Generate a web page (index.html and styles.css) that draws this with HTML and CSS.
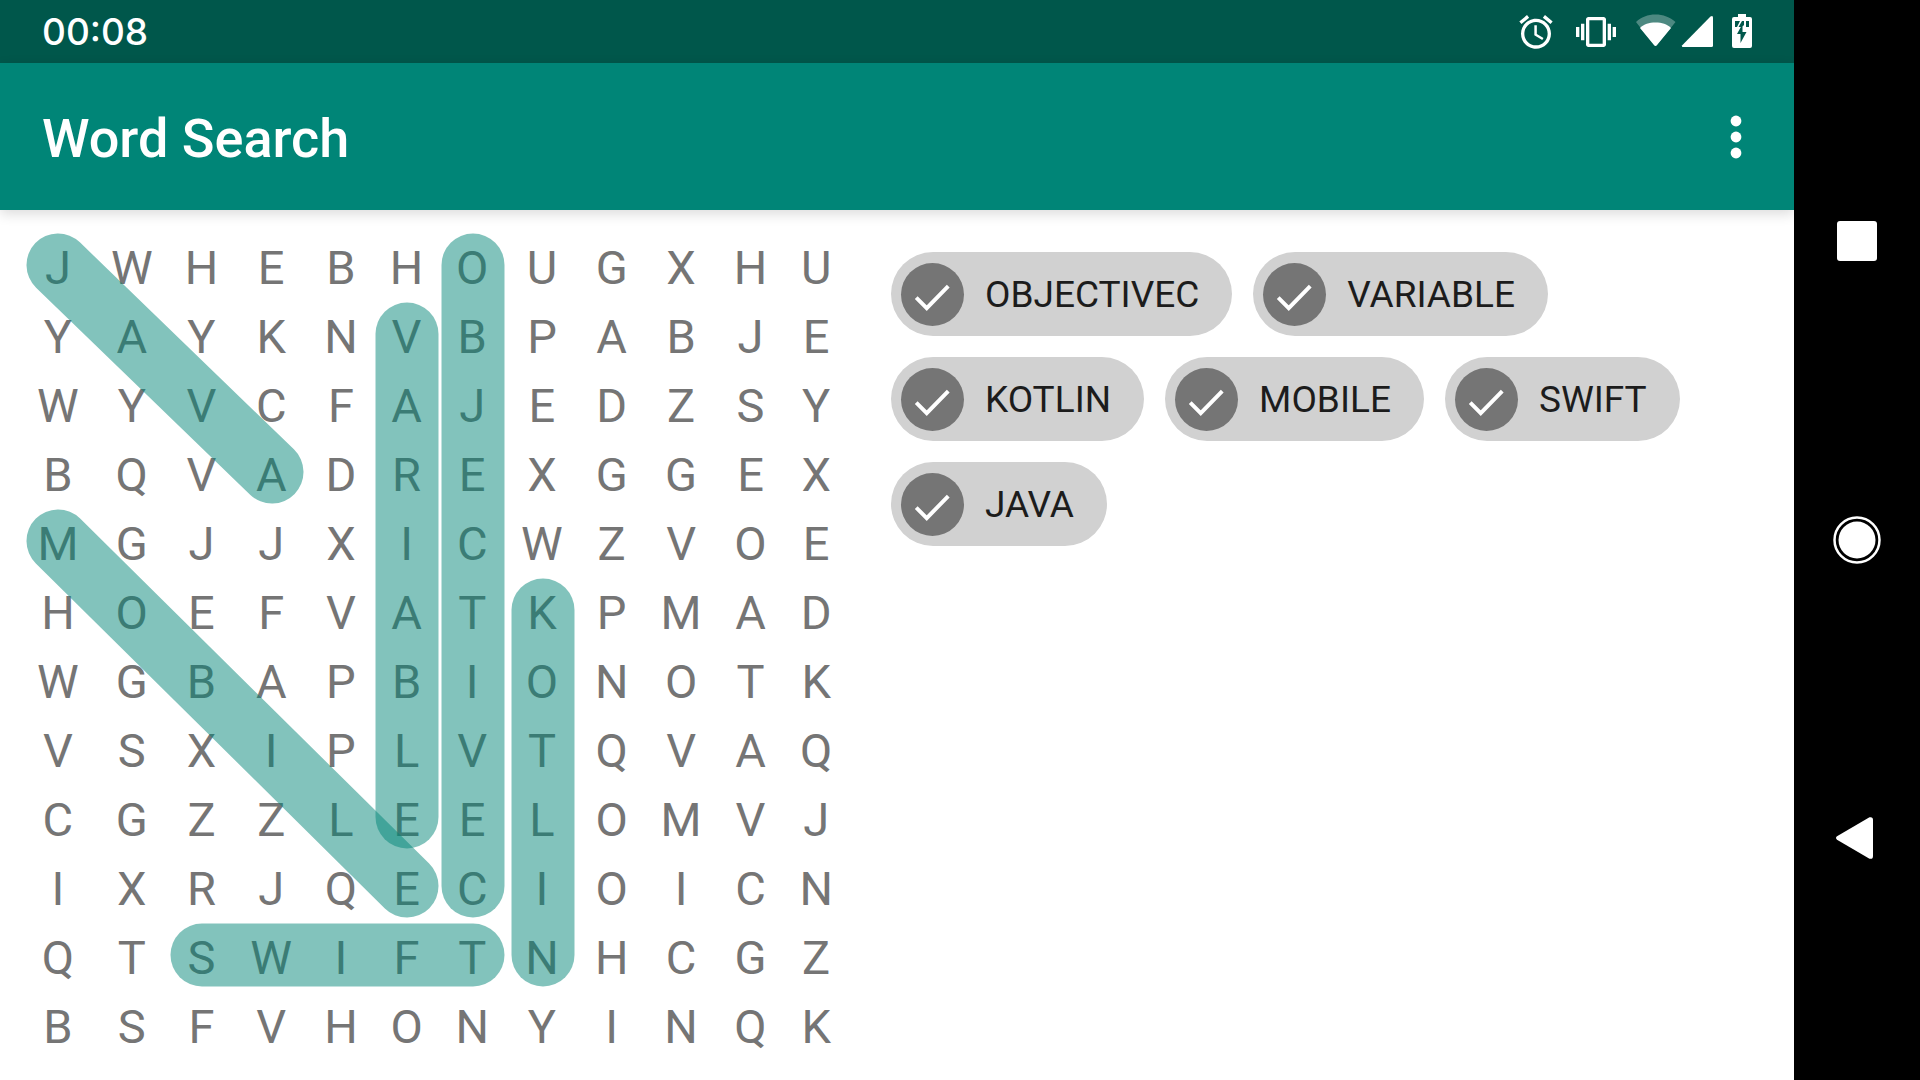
FILE: index.html
```html
<!DOCTYPE html>
<html lang="en">
<head>
<meta charset="utf-8">
<meta name="viewport" content="width=device-width, initial-scale=1">
<title>Word Search</title>
<link rel="stylesheet" href="styles.css">
</head>
<body>
<div class="app">
  <div class="status-bar">
    <time class="clock">00:08</time>
    <div class="status-icons">
      <svg width="40" height="40" viewBox="0 0 24 24" role="img" aria-label="Alarm"><path d="M22 5.72l-4.6-3.86-1.29 1.53 4.6 3.86L22 5.72zM7.88 3.39L6.6 1.86 2 5.71l1.29 1.53 4.59-3.85zM12.5 8H11v6l4.75 2.85.75-1.23-4-2.37V8zM12 4c-4.97 0-9 4.03-9 9s4.02 9 9 9c4.97 0 9-4.03 9-9s-4.03-9-9-9zm0 16c-3.87 0-7-3.13-7-7s3.13-7 7-7 7 3.13 7 7-3.13 7-7 7z"/></svg>
      <svg width="40" height="40" viewBox="0 0 24 24" role="img" aria-label="Vibrate"><path d="M0 15h2V9H0v6zm3 2h2V7H3v10zm19-8v6h2V9h-2zm-3 8h2V7h-2v10zM16.500 3h-9C6.670 3 6 3.670 6 4.500v15c0 .83.67 1.500 1.500 1.500h9c.83 0 1.500-.67 1.500-1.500v-15c0-.83-.67-1.500-1.500-1.500zM16 19H8V5h8v14z"/></svg>
      <div class="signal-icons">
        <svg width="40" height="40" viewBox="0 0 40 40" role="img" aria-label="Wi-Fi"><path opacity=".3" d="M0 10C5 5 12 2.500 19.500 2.500S34 5 39.500 10L21 33q-1.500 2-3 0z"/><path d="M4 16C8 12 13 10.500 19.500 10.500S31 12 35 16L21 33q-1.500 2-3 0z"/></svg>
        <svg class="cell" width="30" height="40" viewBox="0 0 30 40" role="img" aria-label="Mobile signal"><path d="M0 33.500L28.500 4.500Q31 3 31 5.500V33.500Q31 35 29.500 35H1Q-.500 35 0 33.500z"/></svg>
      </div>
      <svg width="20" height="40" viewBox="0 0 20 40" role="img" aria-label="Battery charging"><path d="M6 2h8v3h4q2 0 2 2v27q0 2-2 2H2q-2 0-2-2V7q0-2 2-2h4z"/><path class="cut" d="M3 9h5L5 15H3zM12 9v4l-2 2H6.500L10 9zM14 9h3v6h-3zM10.500 12v8h4L8.500 31v-9H5z"/></svg>
    </div>
  </div>
  <header class="app-bar">
    <h1 class="title">Word Search</h1>
    <button class="more" type="button" aria-label="More options">
      <svg width="12" height="44" viewBox="0 0 12 44"><circle cx="6" cy="6" r="5.400"/><circle cx="6" cy="22" r="5.400"/><circle cx="6" cy="38" r="5.400"/></svg>
    </button>
  </header>
  <main class="content">
    <div class="board">
      <table class="letters">
        <tr><td>J</td><td>W</td><td>H</td><td>E</td><td>B</td><td>H</td><td>O</td><td>U</td><td>G</td><td>X</td><td>H</td><td>U</td></tr>
        <tr><td>Y</td><td>A</td><td>Y</td><td>K</td><td>N</td><td>V</td><td>B</td><td>P</td><td>A</td><td>B</td><td>J</td><td>E</td></tr>
        <tr><td>W</td><td>Y</td><td>V</td><td>C</td><td>F</td><td>A</td><td>J</td><td>E</td><td>D</td><td>Z</td><td>S</td><td>Y</td></tr>
        <tr><td>B</td><td>Q</td><td>V</td><td>A</td><td>D</td><td>R</td><td>E</td><td>X</td><td>G</td><td>G</td><td>E</td><td>X</td></tr>
        <tr><td>M</td><td>G</td><td>J</td><td>J</td><td>X</td><td>I</td><td>C</td><td>W</td><td>Z</td><td>V</td><td>O</td><td>E</td></tr>
        <tr><td>H</td><td>O</td><td>E</td><td>F</td><td>V</td><td>A</td><td>T</td><td>K</td><td>P</td><td>M</td><td>A</td><td>D</td></tr>
        <tr><td>W</td><td>G</td><td>B</td><td>A</td><td>P</td><td>B</td><td>I</td><td>O</td><td>N</td><td>O</td><td>T</td><td>K</td></tr>
        <tr><td>V</td><td>S</td><td>X</td><td>I</td><td>P</td><td>L</td><td>V</td><td>T</td><td>Q</td><td>V</td><td>A</td><td>Q</td></tr>
        <tr><td>C</td><td>G</td><td>Z</td><td>Z</td><td>L</td><td>E</td><td>E</td><td>L</td><td>O</td><td>M</td><td>V</td><td>J</td></tr>
        <tr><td>I</td><td>X</td><td>R</td><td>J</td><td>Q</td><td>E</td><td>C</td><td>I</td><td>O</td><td>I</td><td>C</td><td>N</td></tr>
        <tr><td>Q</td><td>T</td><td>S</td><td>W</td><td>I</td><td>F</td><td>T</td><td>N</td><td>H</td><td>C</td><td>G</td><td>Z</td></tr>
        <tr><td>B</td><td>S</td><td>F</td><td>V</td><td>H</td><td>O</td><td>N</td><td>Y</td><td>I</td><td>N</td><td>Q</td><td>K</td></tr>
      </table>
      <svg class="found" width="828" height="828" viewBox="0 0 828 828" aria-hidden="true">
        <line x1="37" y1="32" x2="251" y2="239"/>
        <line x1="37" y1="308" x2="386" y2="653"/>
        <line x1="386" y1="101" x2="386" y2="584"/>
        <line x1="452" y1="32" x2="452" y2="653"/>
        <line x1="522" y1="377" x2="522" y2="722"/>
        <line x1="181" y1="722" x2="452" y2="722"/>
      </svg>
    </div>
    <ul class="words">
      <li class="chip"><svg class="check" viewBox="0 0 24 24"><path d="M5.800 13.200l4 4L18 8.800"/></svg>OBJECTIVEC</li>
      <li class="chip"><svg class="check" viewBox="0 0 24 24"><path d="M5.800 13.200l4 4L18 8.800"/></svg>VARIABLE</li>
      <li class="chip"><svg class="check" viewBox="0 0 24 24"><path d="M5.800 13.200l4 4L18 8.800"/></svg>KOTLIN</li>
      <li class="chip"><svg class="check" viewBox="0 0 24 24"><path d="M5.800 13.200l4 4L18 8.800"/></svg>MOBILE</li>
      <li class="chip"><svg class="check" viewBox="0 0 24 24"><path d="M5.800 13.200l4 4L18 8.800"/></svg>SWIFT</li>
      <li class="chip"><svg class="check" viewBox="0 0 24 24"><path d="M5.800 13.200l4 4L18 8.800"/></svg>JAVA</li>
    </ul>
  </main>
</div>
<nav class="system-nav" aria-label="System navigation">
  <button type="button" aria-label="Overview"><svg width="48" height="48" viewBox="0 0 48 48"><rect x="4" y="4" width="40" height="40" rx="3"/></svg></button>
  <button type="button" aria-label="Home"><svg width="48" height="48" viewBox="0 0 48 48"><circle cx="24" cy="24" r="18.500"/><circle class="ring" cx="24" cy="24" r="22.500"/></svg></button>
  <button type="button" aria-label="Back"><svg width="48" height="48" viewBox="0 0 48 48"><path d="M4 21.300L36.500 2.300Q40 1.500 40 5V41Q40 44.500 36.500 43.700L4 24.700Q2 23 4 21.300z"/></svg></button>
</nav>
</body>
</html>
```
FILE: styles.css
```css
* { box-sizing: border-box; }

body {
  margin: 0;
  display: flex;
  min-height: 100vh;
  background: #fff;
  font-family: Roboto, sans-serif;
}

button {
  display: flex;
  align-items: center;
  justify-content: center;
  padding: 0;
  border: 0;
  background: none;
}

svg { display: block; fill: #fff; }

.app {
  flex: 1;
  min-width: 0;
  display: flex;
  flex-direction: column;
}

.status-bar {
  display: flex;
  align-items: center;
  justify-content: space-between;
  height: 63px;
  padding: 0 42px;
  background: #00574b;
  color: #fff;
}

.clock {
  font: 500 37px/1 Inter, sans-serif;
}

.status-icons { display: flex; gap: 20px; }
.signal-icons { display: flex; gap: 6px; }
.cell { overflow: visible; }
.cut { fill: #00574b; }

.app-bar {
  display: flex;
  align-items: center;
  justify-content: space-between;
  height: 147px;
  padding: 0 52px 0 42px;
  background: #008577;
  color: #fff;
  box-shadow: 0 4px 12px rgba(0, 0, 0, .14);
}

.title {
  margin: 0;
  padding-top: 4px;
  font-size: 54px;
  font-weight: 500;
}

.content {
  flex: 1;
  display: flex;
  padding: 23px 42px 10px 21px;
  gap: 42px;
}

.board { position: relative; }

.letters {
  width: 828px;
  border-collapse: collapse;
  color: #757575;
  font-size: 47px;
  line-height: 69px;
  text-align: center;
}

.letters td { padding: 0 16px; }

.found {
  position: absolute;
  top: 0;
  left: 0;
  stroke: #008577;
  stroke-opacity: .49;
  stroke-width: 63;
  stroke-linecap: round;
}

.words {
  flex: 1;
  display: flex;
  flex-wrap: wrap;
  align-content: flex-start;
  gap: 21px;
  margin: 0;
  padding: 19px 0 0;
  list-style: none;
}

.chip {
  display: flex;
  align-items: center;
  gap: 21px;
  height: 84px;
  padding: 0 33px 0 10px;
  border-radius: 42px;
  background: #d1d1d1;
  color: #1c1c1c;
  font-size: 37px;
}

.check {
  width: 63px;
  height: 63px;
  border-radius: 50%;
  background: #757575;
  fill: none;
  stroke: #fff;
  stroke-width: 1.5;
}

.system-nav {
  display: flex;
  flex-direction: column;
  justify-content: space-evenly;
  width: 126px;
  background: #000;
}

.system-nav button { height: 116px; }

.ring {
  fill: none;
  stroke: #fff;
  stroke-width: 2.5;
}
```
